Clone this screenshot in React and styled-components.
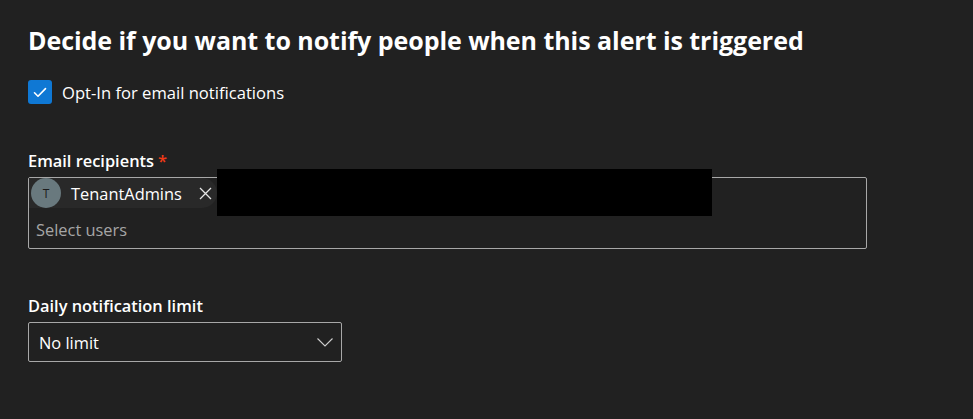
import React from "react";
import styled, { createGlobalStyle } from "styled-components";

const Global = createGlobalStyle`
  html, body { margin: 0; padding: 0; background: #212121; }
  body { font-family: "Open Sans", "Noto Sans", sans-serif; color: #ffffff; }
  * { box-sizing: border-box; }
`;

const Page = styled.div`
  width: 973px;
  height: 419px;
  background: #212121;
  padding: 22px 0 0 28px;
  display: flex;
  flex-direction: column;
`;

const Title = styled.h2`
  margin: 0;
  font-size: 25px;
  font-weight: 700;
  line-height: 36px;
  color: #ffffff;
  letter-spacing: -0.05px;
`;

const CheckRow = styled.label`
  display: flex;
  align-items: center;
  gap: 10px;
  margin-top: 22px;
  font-size: 16.6px;
  color: #ffffff;
`;

const Box = styled.span`
  width: 24px;
  height: 24px;
  border-radius: 3px;
  background: #0f78d4;
  display: flex;
  align-items: center;
  justify-content: center;
`;

const Field = styled.div`
  display: flex;
  flex-direction: column;
  margin-top: ${(p) => p.$top}px;
`;

const Label = styled.div`
  font-size: 16.4px;
  font-weight: 600;
  line-height: 22px;
  margin-bottom: 5px;
  color: #ffffff;
`;

const Req = styled.span`
  color: #f03a17;
  margin-left: 4px;
`;

const PickerBox = styled.div`
  width: 839px;
  height: 72px;
  border: 1px solid #a8a8a8;
  border-radius: 2px;
  position: relative;
  display: flex;
  flex-direction: column;
`;

const ChipRow = styled.div`
  display: flex;
  align-items: center;
  height: 30px;
`;

const Chip = styled.div`
  display: flex;
  align-items: center;
  height: 30px;
  background: #292929;
  border-radius: 0 15px 15px 0;
  padding: 0 4px 0 2px;
  width: 188px;
`;

const Avatar = styled.div`
  width: 30px;
  height: 30px;
  border-radius: 50%;
  background: #69797e;
  color: #1b1b1b;
  font-size: 12px;
  display: flex;
  align-items: center;
  justify-content: center;
`;

const ChipName = styled.span`
  margin-left: 10px;
  font-size: 16.4px;
  color: #ffffff;
  flex: 1;
`;

const Remove = styled.span`
  width: 16px;
  display: flex;
  align-items: center;
  justify-content: center;
`;

const Redact = styled.div`
  position: absolute;
  left: 188px;
  top: -9px;
  width: 495px;
  height: 47px;
  background: #000000;
`;

const Placeholder = styled.div`
  padding: 11px 0 0 7px;
  font-size: 16.4px;
  color: #a6a6a6;
  line-height: 22px;
`;

const Select = styled.div`
  width: 314px;
  height: 40px;
  border: 1px solid #a8a8a8;
  border-radius: 2px;
  display: flex;
  align-items: center;
  justify-content: space-between;
  padding: 0 8px 0 10px;
  font-size: 16.4px;
  color: #ffffff;
`;

export default function App() {
  return (
    <Page>
      <Global />
      <Title>Decide if you want to notify people when this alert is triggered</Title>
      <CheckRow>
        <Box>
          <svg width="14" height="11" viewBox="0 0 14 11" fill="none">
            <path d="M1.5 5.8 L5 9.2 L12.5 1.6" stroke="#fff" strokeWidth="1.6" strokeLinecap="round" strokeLinejoin="round" />
          </svg>
        </Box>
        Opt-In for email notifications
      </CheckRow>
      <Field $top={46}>
        <Label>
          Email recipients<Req>*</Req>
        </Label>
        <PickerBox>
          <ChipRow>
            <Chip>
              <Avatar>T</Avatar>
              <ChipName>TenantAdmins</ChipName>
              <Remove>
                <svg width="13" height="13" viewBox="0 0 13 13">
                  <path d="M1 1 L12 12 M12 1 L1 12" stroke="#e6e6e6" strokeWidth="1.3" />
                </svg>
              </Remove>
            </Chip>
          </ChipRow>
          <Redact />
          <Placeholder>Select users</Placeholder>
        </PickerBox>
      </Field>
      <Field $top={46}>
        <Label>Daily notification limit</Label>
        <Select>
          No limit
          <svg width="16" height="9" viewBox="0 0 16 9" fill="none">
            <path d="M0.5 0.5 L8 8 L15.5 0.5" stroke="#cfcfcf" strokeWidth="1.1" />
          </svg>
        </Select>
      </Field>
    </Page>
  );
}
